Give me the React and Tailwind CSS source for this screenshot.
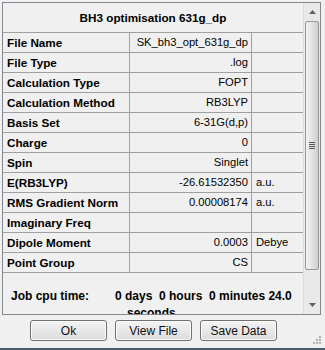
import React from "react";

const rows = [
  ["File Name", "SK_bh3_opt_631g_dp", ""],
  ["File Type", ".log", ""],
  ["Calculation Type", "FOPT", ""],
  ["Calculation Method", "RB3LYP", ""],
  ["Basis Set", "6-31G(d,p)", ""],
  ["Charge", "0", ""],
  ["Spin", "Singlet", ""],
  ["E(RB3LYP)", "-26.61532350", "a.u."],
  ["RMS Gradient Norm", "0.00008174", "a.u."],
  ["Imaginary Freq", "", ""],
  ["Dipole Moment", "0.0003", "Debye"],
  ["Point Group", "CS", ""],
];

function Btn({ children }) {
  return (
    <div className="w-[77px] h-[21px] rounded-[3px] border border-[#707070] bg-gradient-to-b from-[#f4f4f4] to-[#dcdcdc] flex items-center justify-center text-[12px] text-[#111] shadow-[inset_0_0_0_1px_#fcfcfc]">
      {children}
    </div>
  );
}

export default function App() {
  return (
    <div
      className="w-[325px] h-[350px] bg-[#f0f0f0] flex flex-col text-black overflow-hidden relative"
      style={{ fontFamily: '"Liberation Sans", Arial, sans-serif' }}
    >
      <div className="ml-[2px] mt-[2px] w-[319px] h-[313px] shrink-0 border border-[#828790] flex overflow-hidden">
        <div className="w-[300px] flex flex-col overflow-hidden">
          <div className="h-[30px] shrink-0 border-b border-[#a0a0a0] flex items-center justify-center font-bold text-[11.7px]">
            BH3 optimisation 631g_dp
          </div>
          {rows.map(([l, v, u]) => (
            <div key={l} className="h-[20px] shrink-0 border-b border-[#a0a0a0] flex text-[11.7px]">
              <div className="w-[127px] border-r border-[#a0a0a0] pl-[4px] font-bold flex items-center">{l}</div>
              <div className="w-[122px] border-r border-[#a0a0a0] pr-[3px] flex items-center justify-end text-[11.2px]">{v}</div>
              <div className="flex-1 pl-[4px] flex items-center text-[11.2px]">{u}</div>
            </div>
          ))}
          <div className="shrink-0 flex pt-[15px] pl-[8px] font-bold text-[12px] leading-[17px]">
            <div className="w-[104px]">Job cpu time:</div>
            <div>
              <div className="whitespace-pre">0 days  0 hours  0 minutes 24.0</div>
              <div className="pl-[12px]">seconds</div>
            </div>
          </div>
        </div>
        <div className="w-[17px] flex flex-col bg-[#e9e9e9] border-l border-[#dcdcdc]">
          <div className="h-[18px] shrink-0 flex items-center justify-center">
            <svg width="7" height="4" viewBox="0 0 7 4"><path d="M0 4 L3.5 0 L7 4 Z" fill="#606060" /></svg>
          </div>
          <div className="flex-1 px-[1px]">
            <div className="h-[249px] rounded-[2px] border border-[#979797] bg-gradient-to-r from-[#f2f2f2] via-[#e2e2e2] to-[#cfcfcf] flex flex-col items-center justify-center gap-[1px]">
              <div className="w-[6px] h-[1px] bg-[#555]" />
              <div className="w-[6px] h-[1px] bg-[#555]" />
              <div className="w-[6px] h-[1px] bg-[#555]" />
              <div className="w-[6px] h-[1px] bg-[#555]" />
            </div>
          </div>
          <div className="h-[18px] shrink-0 flex items-center justify-center">
            <svg width="7" height="4" viewBox="0 0 7 4"><path d="M0 0 L7 0 L3.5 4 Z" fill="#606060" /></svg>
          </div>
        </div>
      </div>
      <div className="mt-[5px] pl-[30px] flex gap-[8px]">
        <Btn>Ok</Btn>
        <Btn>View File</Btn>
        <Btn>Save Data</Btn>
      </div>
      <div className="absolute right-[4px] bottom-[6px] grid grid-cols-3 gap-[1px]">
        <div />
        <div />
        <div className="w-[2px] h-[2px] bg-[#b0b0b0]" />
        <div />
        <div className="w-[2px] h-[2px] bg-[#b0b0b0]" />
        <div className="w-[2px] h-[2px] bg-[#b0b0b0]" />
        <div className="w-[2px] h-[2px] bg-[#b0b0b0]" />
        <div className="w-[2px] h-[2px] bg-[#b0b0b0]" />
        <div className="w-[2px] h-[2px] bg-[#b0b0b0]" />
      </div>
      <div className="absolute left-0 right-0 bottom-0 h-[2px] bg-[#46586b]" />
    </div>
  );
}
